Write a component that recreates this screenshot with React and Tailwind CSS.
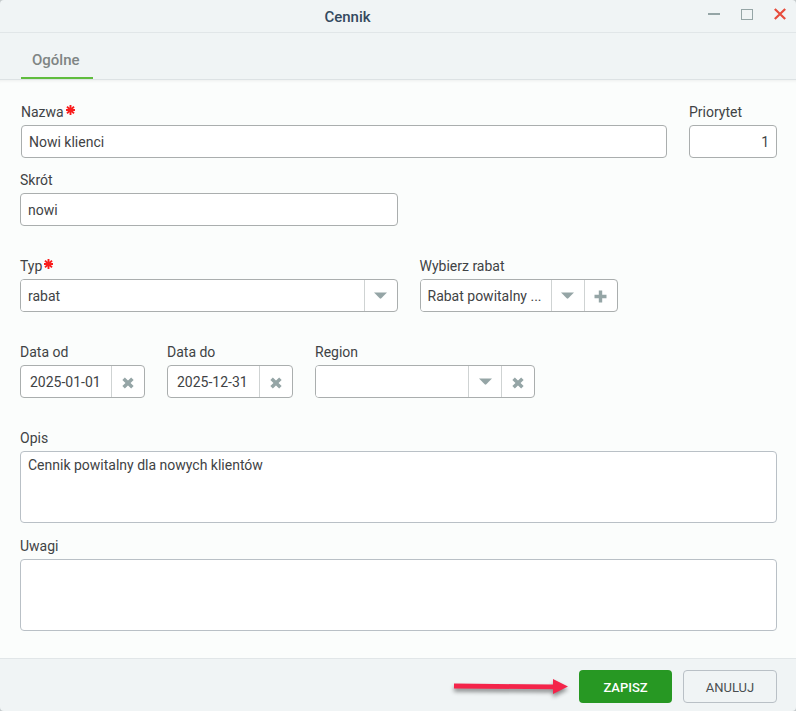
import React, { useState } from "react";
import clsx from "clsx";

const Caret = () => (
    <svg width="13" height="7" viewBox="0 0 13 7" aria-hidden="true">
        <path d="M0 0.5h13L7.3 6.3q-.8.7-1.6 0z" fill="#95a5a6" />
    </svg>
);

const Cross = () => (
    <svg width="12" height="12" viewBox="0 0 12 12" className="mt-0.5" aria-hidden="true">
        <path d="M1.6 1.8L10.4 10.2M10.4 1.8L1.6 10.2" stroke="#95a5a6" strokeWidth="3.6" />
    </svg>
);

const Plus = () => (
    <svg width="13" height="13" viewBox="0 0 13 13" className="mt-0.5" aria-hidden="true">
        <path d="M6.5 0.5v12M0.5 6.5h12" stroke="#95a5a6" strokeWidth="3.4" />
    </svg>
);

const Required = () => (
    <svg width="9" height="10" viewBox="0 0 9 10" className="mt-[3px] ml-0.5" aria-hidden="true">
        <path
            d="M4.5 0v10M0 5h9M1 1.6l7 6.8M8 1.6L1 8.4"
            stroke="#f91d1d"
            strokeWidth="1.9"
        />
    </svg>
);

const Field = ({ id, label, required, className, children }) => (
    <div className={className}>
        <div className="flex mb-[3px]">
            <label htmlFor={id}>{label}</label>
            {required && <Required />}
        </div>
        {children}
    </div>
);

const InputGroup = ({ children }) => (
    <div className="flex h-[33px] bg-white border border-[#aaaeae] rounded overflow-hidden">
        {children}
    </div>
);

const AddonButton = ({ label, children }) => (
    <button
        type="button"
        aria-label={label}
        className="w-[33px] shrink-0 border-l border-[#cfd3d3] flex items-center justify-center"
    >
        {children}
    </button>
);

const TextInput = ({ className, ...props }) => (
    <input
        type="text"
        className={clsx(
            "block w-full h-[33px] px-[7px] bg-white border border-[#aaaeae] rounded outline-none",
            className
        )}
        {...props}
    />
);

const TextArea = (props) => (
    <textarea
        className="block w-full h-[72px] px-[7px] py-[3px] leading-5 bg-white border border-[#b9c0c6] rounded outline-none resize-none"
        {...props}
    />
);

const SelectInput = ({ id, options }) => (
    <select id={id} className="flex-1 min-w-0 px-[7px] appearance-none bg-white outline-none">
        {options.map((option) => (
            <option key={option}>{option}</option>
        ))}
    </select>
);

const DateInput = ({ id, value, onChange }) => (
    <InputGroup>
        <input
            id={id}
            type="text"
            value={value}
            onChange={(e) => onChange(e.target.value)}
            className="flex-1 min-w-0 pl-[9px] outline-none"
        />
        <AddonButton label="Wyczyść datę">
            <Cross />
        </AddonButton>
    </InputGroup>
);

const TitleBar = () => (
    <header className="flex items-center h-[33px] border-b border-[#e1e6e8]">
        <h1 className="flex-1 pt-[3px] pr-3 text-center text-[15px] font-medium text-[#34495e]">
            Cennik
        </h1>
        <div className="flex items-center gap-[19px] pr-[9px] pb-1">
            <button type="button" aria-label="Minimalizuj">
                <svg width="14" height="14" viewBox="0 0 14 14">
                    <path d="M1 7h12" stroke="#95a5a6" strokeWidth="2" />
                </svg>
            </button>
            <button type="button" aria-label="Maksymalizuj">
                <svg width="14" height="14" viewBox="0 0 14 14">
                    <rect x="1.5" y="2.5" width="11" height="10" fill="none" stroke="#95a5a6" />
                </svg>
            </button>
            <button type="button" aria-label="Zamknij">
                <svg width="14" height="14" viewBox="0 0 14 14">
                    <path d="M1.8 2l10.4 10M12.2 2L1.8 12" stroke="#e74c3c" strokeWidth="2.2" />
                </svg>
            </button>
        </div>
    </header>
);

const Pointer = () => (
    <svg width="124" height="30" viewBox="0 0 124 30" className="overflow-visible" aria-hidden="true">
        <path
            d="M10 11.5L109 12.5V7L124 14.5L109 22V17.2L10 16.5z"
            fill="#f4244a"
            className="drop-shadow-[0_3px_2px_rgba(0,0,0,0.45)]"
        />
    </svg>
);

const App = () => {
    const [form, setForm] = useState({
        nazwa: "Nowi klienci",
        priorytet: "1",
        skrot: "nowi",
        dataOd: "2025-01-01",
        dataDo: "2025-12-31",
        opis: "Cennik powitalny dla nowych klientów",
        uwagi: "",
    });

    const setField = (name, value) => setForm({ ...form, [name]: value });
    const handleChange = (e) => setField(e.target.name, e.target.value);

    return (
        <div className="min-h-screen bg-[#c4c9cb] font-[Roboto,sans-serif] text-sm text-[#3f4345]">
            <form className="flex flex-col min-h-screen bg-[#f0f4f5] rounded overflow-hidden">
                <TitleBar />

                {/* Tabs */}
                <nav className="flex h-[47px] pl-[21px] border-b border-[#dde2e4]">
                    <a
                        href="#ogolne"
                        className="w-[72px] pl-[11px] pt-3 flex items-center border-b-2 border-[#5fbc3d] text-[15px] font-medium text-[#7f8584]"
                    >
                        Ogólne
                    </a>
                </nav>

                {/* Form */}
                <main className="flex-1 pt-[22px] pl-5 pr-[19px] pb-6 bg-[#fbfdfc] shadow-[inset_0_3px_3px_-2px_rgba(0,0,0,0.06)]">
                    <div className="flex gap-[22px] pl-px">
                        <Field id="nazwa" label="Nazwa" required className="flex-1">
                            <TextInput id="nazwa" name="nazwa" value={form.nazwa} onChange={handleChange} />
                        </Field>
                        <Field id="priorytet" label="Priorytet" className="w-[88px]">
                            <TextInput
                                id="priorytet"
                                name="priorytet"
                                value={form.priorytet}
                                onChange={handleChange}
                                className="text-right"
                            />
                        </Field>
                    </div>

                    <Field id="skrot" label="Skrót" className="w-[calc(50%-1px)] mt-3">
                        <TextInput id="skrot" name="skrot" value={form.skrot} onChange={handleChange} />
                    </Field>

                    <div className="flex gap-[22px] mt-[30px]">
                        <Field id="typ" label="Typ" required className="w-[calc(50%-1px)]">
                            <InputGroup>
                                <SelectInput id="typ" options={["rabat"]} />
                                <AddonButton label="Rozwiń typ">
                                    <Caret />
                                </AddonButton>
                            </InputGroup>
                        </Field>
                        <Field id="rabat" label="Wybierz rabat" className="w-[198px]">
                            <InputGroup>
                                <SelectInput id="rabat" options={["Rabat powitalny ..."]} />
                                <AddonButton label="Rozwiń rabat">
                                    <Caret />
                                </AddonButton>
                                <AddonButton label="Dodaj rabat">
                                    <Plus />
                                </AddonButton>
                            </InputGroup>
                        </Field>
                    </div>

                    <div className="flex gap-[22px] mt-[30px]">
                        <Field id="dataOd" label="Data od" className="w-[125px]">
                            <DateInput id="dataOd" value={form.dataOd} onChange={(v) => setField("dataOd", v)} />
                        </Field>
                        <Field id="dataDo" label="Data do" className="w-[126px]">
                            <DateInput id="dataDo" value={form.dataDo} onChange={(v) => setField("dataDo", v)} />
                        </Field>
                        <Field id="region" label="Region" className="w-[220px]">
                            <InputGroup>
                                <SelectInput id="region" options={[""]} />
                                <AddonButton label="Rozwiń region">
                                    <Caret />
                                </AddonButton>
                                <AddonButton label="Wyczyść region">
                                    <Cross />
                                </AddonButton>
                            </InputGroup>
                        </Field>
                    </div>

                    <Field id="opis" label="Opis" className="mt-[30px]">
                        <TextArea id="opis" name="opis" value={form.opis} onChange={handleChange} />
                    </Field>

                    <Field id="uwagi" label="Uwagi" className="mt-[13px]">
                        <TextArea id="uwagi" name="uwagi" value={form.uwagi} onChange={handleChange} />
                    </Field>
                </main>

                {/* Actions */}
                <footer className="flex items-center justify-end gap-[11px] h-[53px] pt-[3px] pr-[19px] border-t border-[#e1e6e8]">
                    <Pointer />
                    <button
                        type="button"
                        className="w-[93px] h-[33px] pt-[3px] rounded bg-[#279823] text-[13px] font-medium text-white"
                    >
                        ZAPISZ
                    </button>
                    <button
                        type="button"
                        className="w-[94px] h-[33px] pt-[3px] rounded border border-[#b9c0c6] text-[13px] text-[#4a4f51]"
                    >
                        ANULUJ
                    </button>
                </footer>
            </form>
        </div>
    );
};

export default App;
